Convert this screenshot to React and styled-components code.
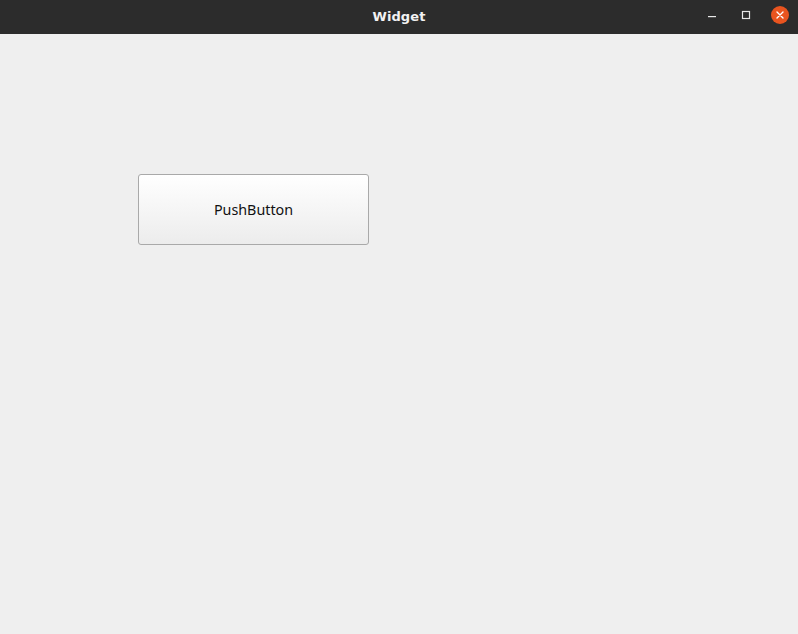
import React from 'react';
import styled, { createGlobalStyle } from 'styled-components';

const GlobalStyle = createGlobalStyle`
  html, body {
    margin: 0;
    padding: 0;
    background: #efefef;
  }
`;

const Window = styled.div`
  width: 798px;
  height: 634px;
  display: flex;
  flex-direction: column;
  background: #efefef;
  font-family: 'Noto Sans', 'DejaVu Sans', sans-serif;
`;

const TitleBar = styled.header`
  height: 34px;
  flex: none;
  background: #2c2c2c;
  display: grid;
  grid-template-columns: 1fr auto 1fr;
  align-items: center;
`;

const Title = styled.h1`
  grid-column: 2;
  margin: 0 0 2px;
  font-size: 13px;
  font-weight: 700;
  color: #f2f2f2;
  font-family: 'DejaVu Sans', 'Noto Sans', sans-serif;
  letter-spacing: 0.1px;
`;

const Controls = styled.div`
  justify-self: end;
  display: flex;
  align-items: center;
  padding-right: 1px;
`;

const ControlButton = styled.button`
  width: 34px;
  height: 34px;
  padding: 0 0 4px;
  border: none;
  background: transparent;
  display: flex;
  align-items: center;
  justify-content: center;
  cursor: pointer;
`;

const CloseCircle = styled.span`
  width: 18px;
  height: 18px;
  border-radius: 50%;
  background: #e9541f;
  display: flex;
  align-items: center;
  justify-content: center;
`;

const Content = styled.main`
  flex: 1;
  padding: 140px 0 0 138px;
`;

const PushButton = styled.button`
  width: 231px;
  height: 71px;
  border: 1px solid #a9a9a9;
  border-radius: 3px;
  background: linear-gradient(#ffffff, #ececec);
  font-family: 'Noto Sans', 'DejaVu Sans', sans-serif;
  font-size: 14.3px;
  color: #111111;
  padding: 0;
  cursor: pointer;
`;

export default function App() {
  return (
    <>
      <GlobalStyle />
      <Window>
        <TitleBar>
          <Title>Widget</Title>
          <Controls>
            <ControlButton aria-label="Minimize">
              <svg width="10" height="10" viewBox="0 0 10 10">
                <rect x="1" y="6" width="8" height="1.2" fill="#e8e8e8" />
              </svg>
            </ControlButton>
            <ControlButton aria-label="Maximize">
              <svg width="10" height="10" viewBox="0 0 10 10">
                <rect x="1.5" y="1.5" width="7" height="7" fill="none" stroke="#e8e8e8" strokeWidth="1.2" />
              </svg>
            </ControlButton>
            <ControlButton aria-label="Close">
              <CloseCircle>
                <svg width="10" height="10" viewBox="0 0 10 10">
                  <path d="M2 2 L8 8 M8 2 L2 8" stroke="#ffffff" strokeWidth="1.4" strokeLinecap="round" />
                </svg>
              </CloseCircle>
            </ControlButton>
          </Controls>
        </TitleBar>
        <Content>
          <PushButton>PushButton</PushButton>
        </Content>
      </Window>
    </>
  );
}
